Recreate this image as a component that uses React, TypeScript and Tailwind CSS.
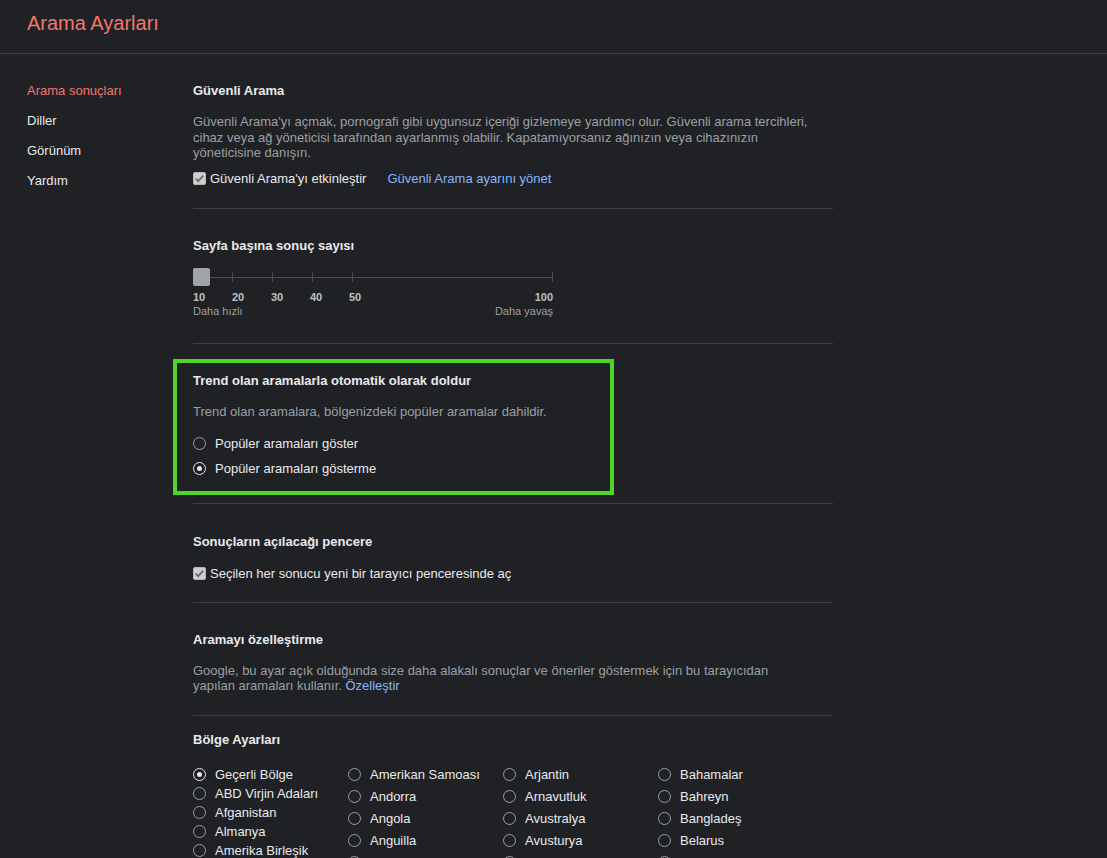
import React from "react";

const Checkbox = () => (
  <svg width="13" height="13" viewBox="0 0 13 13" className="shrink-0">
    <rect x="0.5" y="0.5" width="12" height="12" rx="1.5" fill="#cfcfcf" stroke="#b5b5b5" />
    <path d="M2.8 6.6 L5.2 9.1 L10.3 3.6" fill="none" stroke="#6a6a6a" strokeWidth="1.8" />
  </svg>
);

const Radio = ({ checked = false }: { checked?: boolean }) => (
  <span
    className={`shrink-0 w-[13px] h-[13px] rounded-full border flex items-center justify-center ${
      checked ? "border-[#e8eaed]" : "border-[#9aa0a6]"
    }`}
  >
    {checked && <span className="w-[5px] h-[5px] rounded-full bg-[#e8eaed]" />}
  </span>
);

const Divider = () => <div className="h-px bg-[#3c4043]" />;

const Heading = ({ children }: { children: React.ReactNode }) => (
  <div className="text-[13px] leading-[16px] font-bold text-[#e8eaed]">{children}</div>
);

const RadioRow = ({ label, checked = false, h = "h-[16px]" }: { label: string; checked?: boolean; h?: string }) => (
  <div className={`flex items-center gap-[9px] ${h} text-[13px] leading-[16px] text-[#e8eaed]`}>
    <Radio checked={checked} />
    <span className="whitespace-nowrap">{label}</span>
  </div>
);

const col1 = ["Geçerli Bölge", "ABD Virjin Adaları", "Afganistan", "Almanya", "Amerika Birleşik"];
const col2 = ["Amerikan Samoası", "Andorra", "Angola", "Anguilla", "Antigua ve Barbuda"];
const col3 = ["Arjantin", "Arnavutluk", "Avustralya", "Avusturya", "Azerbaycan"];
const col4 = ["Bahamalar", "Bahreyn", "Bangladeş", "Belarus", "Belçika"];

export default function App() {
  return (
    <div className="h-[858px] overflow-hidden bg-[#202124] font-['Liberation_Sans',Arial,sans-serif]">
      <header className="h-[54px] border-b border-[#3c4043] pl-[27px] pt-[11px]">
        <h1 className="text-[20px] leading-[24px] text-[#f0776e] font-normal">Arama Ayarları</h1>
      </header>
      <div className="flex">
        <nav className="w-[193px] shrink-0 pl-[27px] pt-[22px] text-[13px] leading-[30px]">
          <div className="text-[#f0776e]">Arama sonuçları</div>
          <div className="text-[#e8eaed]">Diller</div>
          <div className="text-[#e8eaed]">Görünüm</div>
          <div className="text-[#e8eaed]">Yardım</div>
        </nav>
        <main className="w-[640px]">
          {/* Güvenli Arama */}
          <section className="pt-[29px] pb-[21px]">
            <Heading>Güvenli Arama</Heading>
            <p className="mt-[15px] text-[13px] leading-[15.5px] text-[#9aa0a6]">
              Güvenli Arama'yı açmak, pornografi gibi uygunsuz içeriği gizlemeye yardımcı olur. Güvenli arama tercihleri,
              <br />
              cihaz veya ağ yöneticisi tarafından ayarlanmış olabilir. Kapatamıyorsanız ağınızın veya cihazınızın
              <br />
              yöneticisine danışın.
            </p>
            <div className="mt-[10px] flex items-center h-[16px] text-[13px] leading-[16px]">
              <Checkbox />
              <span className="ml-[4px] text-[#e8eaed]">Güvenli Arama'yı etkinleştir</span>
              <span className="ml-[21px] text-[#8ab4f8]">Güvenli Arama ayarını yönet</span>
            </div>
          </section>
          <Divider />

          {/* Sayfa başına */}
          <section className="pt-[29px] pb-[25px]">
            <Heading>Sayfa başına sonuç sayısı</Heading>
            <div className="mt-[14px] relative w-[360px] h-[18px]">
              <div className="absolute left-0 right-0 top-[9px] h-px bg-[#4b4e52]" />
              <div className="absolute left-[39px] top-[4px] w-px h-[10px] bg-[#4b4e52]" />
              <div className="absolute left-[79px] top-[4px] w-px h-[10px] bg-[#4b4e52]" />
              <div className="absolute left-[119px] top-[4px] w-px h-[10px] bg-[#4b4e52]" />
              <div className="absolute left-[159px] top-[4px] w-px h-[10px] bg-[#4b4e52]" />
              <div className="absolute left-[359px] top-[4px] w-px h-[10px] bg-[#4b4e52]" />
              <div className="absolute left-0 top-0 w-[17px] h-[18px] rounded-[2px] bg-[#a0a3a8]" />
            </div>
            <div className="mt-[5px] relative w-[360px] h-[13px] text-[11px] leading-[13px] font-bold text-[#bdc1c6]">
              <span className="absolute left-0">10</span>
              <span className="absolute left-[39px]">20</span>
              <span className="absolute left-[78px]">30</span>
              <span className="absolute left-[117px]">40</span>
              <span className="absolute left-[156px]">50</span>
              <span className="absolute right-0">100</span>
            </div>
            <div className="mt-[1px] w-[360px] flex justify-between text-[11px] leading-[13px] text-[#9aa0a6]">
              <span>Daha hızlı</span>
              <span>Daha yavaş</span>
            </div>
          </section>
          <Divider />

          {/* Trend */}
          <section className="relative pt-[29px] pb-[26px]">
            <div className="absolute left-[-20px] top-[15px] w-[441px] h-[136px] border-4 border-[#4fd626] pointer-events-none" />
            <Heading>Trend olan aramalarla otomatik olarak doldur</Heading>
            <p className="mt-[15px] text-[13px] leading-[16px] text-[#9aa0a6]">
              Trend olan aramalara, bölgenizdeki popüler aramalar dahildir.
            </p>
            <div className="mt-[16px]">
              <RadioRow label="Popüler aramaları göster" />
            </div>
            <div className="mt-[9px]">
              <RadioRow label="Popüler aramaları gösterme" checked />
            </div>
          </section>
          <Divider />

          {/* Sonuçların */}
          <section className="pt-[30px] pb-[20px]">
            <Heading>Sonuçların açılacağı pencere</Heading>
            <div className="mt-[16px] flex items-center h-[16px] text-[13px] leading-[16px]">
              <Checkbox />
              <span className="ml-[4px] text-[#e8eaed]">Seçilen her sonucu yeni bir tarayıcı penceresinde aç</span>
            </div>
          </section>
          <Divider />

          {/* Aramayı özelleştirme */}
          <section className="pt-[29px] pb-[21px]">
            <Heading>Aramayı özelleştirme</Heading>
            <p className="mt-[15px] text-[13px] leading-[15.5px] text-[#9aa0a6]">
              Google, bu ayar açık olduğunda size daha alakalı sonuçlar ve öneriler göstermek için bu tarayıcıdan
              <br />
              yapılan aramaları kullanır. <span className="text-[#8ab4f8]">Özelleştir</span>
            </p>
          </section>
          <Divider />

          {/* Bölge */}
          <section className="pt-[16px]">
            <Heading>Bölge Ayarları</Heading>
            <div className="mt-[16px] grid grid-cols-[155px_155px_155px_155px]">
              <div className="pt-[1.5px]">
                {col1.map((c, i) => (
                  <RadioRow key={c} label={c} checked={i === 0} h="h-[19px]" />
                ))}
              </div>
              <div>
                {col2.map((c) => (
                  <RadioRow key={c} label={c} h="h-[22px]" />
                ))}
              </div>
              <div>
                {col3.map((c) => (
                  <RadioRow key={c} label={c} h="h-[22px]" />
                ))}
              </div>
              <div>
                {col4.map((c) => (
                  <RadioRow key={c} label={c} h="h-[22px]" />
                ))}
              </div>
            </div>
          </section>
        </main>
      </div>
    </div>
  );
}
